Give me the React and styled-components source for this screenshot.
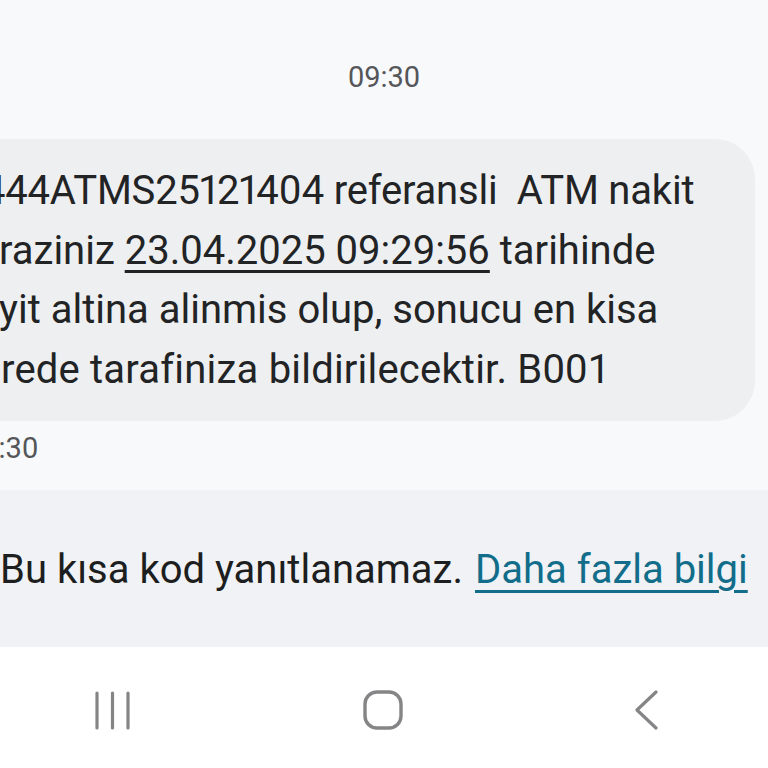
import React from "react";
import styled, { createGlobalStyle } from "styled-components";

const Global = createGlobalStyle`
  html, body { margin: 0; padding: 0; }
  body {
    background: #f8f9fb;
    font-family: Roboto, "Noto Sans", sans-serif;
    overflow: hidden;
  }
`;

const Screen = styled.div`
  width: 768px;
  height: 768px;
  display: flex;
  flex-direction: column;
  overflow: hidden;
  background: #f8f9fb;
`;

const Thread = styled.div`
  flex: 1;
  display: flex;
  flex-direction: column;
  padding-top: 58px;
`;

const DayTime = styled.div`
  text-align: center;
  font-size: 29px;
  color: #555659;
  line-height: 38px;
  height: 38px;
`;

const Bubble = styled.div`
  margin-top: 43px;
  margin-left: -60px;
  width: 815px;
  box-sizing: border-box;
  background: #eeeff1;
  border-radius: 40px;
  padding: 22px 0 22px 60px;
  overflow: hidden;
`;

const Line = styled.div`
  white-space: pre;
  font-size: 40px;
  line-height: 59.5px;
  color: #222325;
  margin-left: ${(p) => p.$offset}px;
  letter-spacing: ${(p) => p.$track || 0}px;
  font-variant-numeric: ${(p) => (p.$prop ? "proportional-nums" : "normal")};
`;

const Linked = styled.span`
  text-decoration: underline;
  text-decoration-thickness: 3px;
  text-underline-offset: 6px;
`;

const Stamp = styled.div`
  margin-top: 8px;
  margin-left: -34px;
  font-size: 29px;
  line-height: 38px;
  color: #555659;
`;

const Footer = styled.div`
  height: 157px;
  background: #f0f2f5;
  display: flex;
  align-items: center;
  padding-left: 0;
  padding-top: 2px;
  box-sizing: border-box;
  font-size: 40px;
  color: #1d1e20;
  white-space: nowrap;
`;

const MoreLink = styled.span`
  color: #116d8a;
  text-decoration: underline;
  text-decoration-thickness: 3px;
  text-underline-offset: 7px;
  margin-left: 12px;
`;

const NavBar = styled.div`
  height: 121px;
  background: #ffffff;
  display: flex;
  align-items: center;
  justify-content: space-between;
  padding: 4px 110px 0 95px;
  box-sizing: border-box;
`;

const NavIcon = styled.svg`
  display: block;
  width: ${(p) => p.$w}px;
  height: 40px;
`;

export default function App() {
  return (
    <>
      <Global />
      <Screen>
        <Thread>
          <DayTime>09:30</DayTime>
          <Bubble>
            <Line $offset={-17} $track={-0.2} $prop>444ATMS25121404 referansli  ATM nakit</Line>
            <Line $offset={-1}>
              raziniz <Linked>23.04.2025 09:29:56</Linked> tarihinde
            </Line>
            <Line $offset={-1}>yit altina alinmis olup, sonucu en kisa</Line>
            <Line $offset={1} $track={0.2}>rede tarafiniza bildirilecektir. B001</Line>
          </Bubble>
          <Stamp>09:30</Stamp>
        </Thread>
        <Footer>
          Bu kısa kod yanıtlanamaz.
          <MoreLink>Daha fazla bilgi</MoreLink>
        </Footer>
        <NavBar>
          <NavIcon $w={35} viewBox="0 0 35 40">
            <g stroke="#858587" strokeWidth="3.2" strokeLinecap="round">
              <line x1="2" y1="3" x2="2" y2="38" />
              <line x1="17.5" y1="3" x2="17.5" y2="38" />
              <line x1="33" y1="3" x2="33" y2="38" />
            </g>
          </NavIcon>
          <NavIcon $w={40} viewBox="0 0 40 40">
            <rect x="2" y="2" width="36" height="36" rx="12" fill="none" stroke="#858587" strokeWidth="3.4" />
          </NavIcon>
          <NavIcon $w={23} viewBox="0 0 23 40">
            <polyline points="21,2 2,20 21,38" fill="none" stroke="#858587" strokeWidth="3.2" strokeLinecap="round" strokeLinejoin="round" />
          </NavIcon>
        </NavBar>
      </Screen>
    </>
  );
}
